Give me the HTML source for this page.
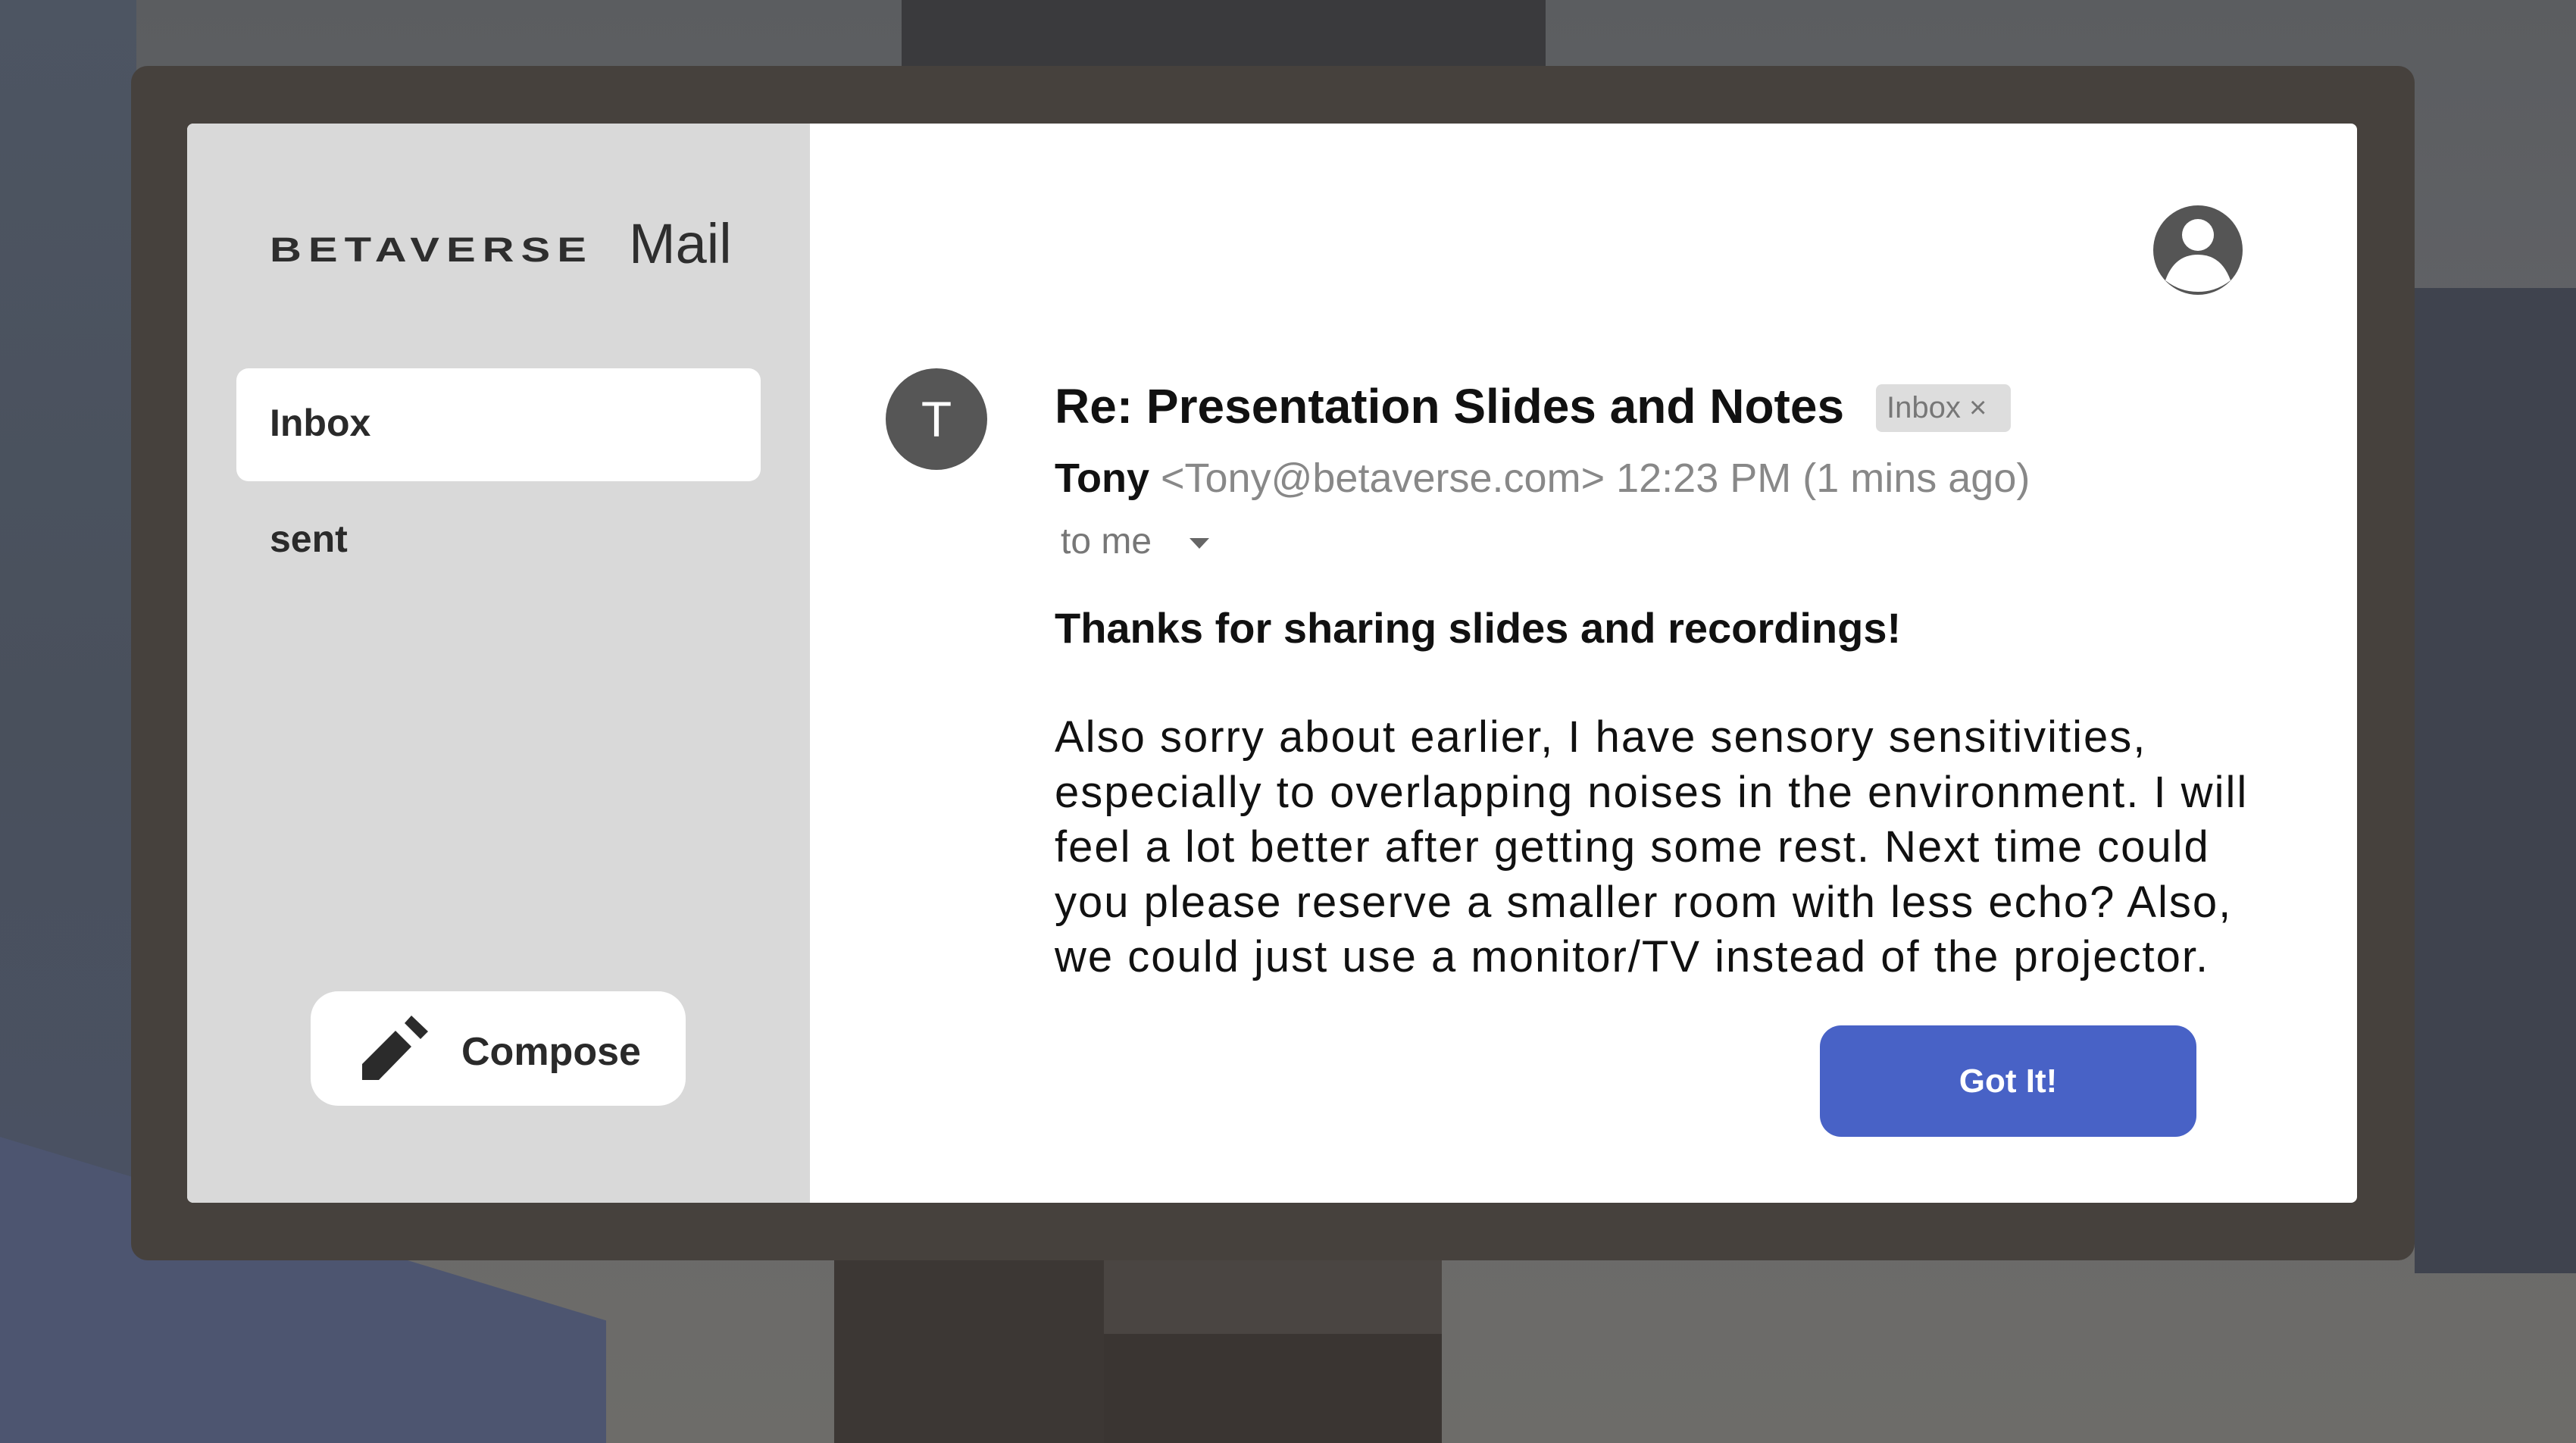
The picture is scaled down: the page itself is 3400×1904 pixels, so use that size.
<!DOCTYPE html>
<html><head><meta charset="utf-8"><style>
*{margin:0;padding:0;box-sizing:border-box}
html,body{width:3400px;height:1904px;overflow:hidden}
body{position:relative;font-family:"Liberation Sans",sans-serif;
background:linear-gradient(180deg,#5b5d60 0%,#64656a 40%,#6d6c69 100%)}
.abs{position:absolute}
</style></head><body>
<div class="abs" style="left:0;top:0;width:180px;height:1904px;background:linear-gradient(180deg,#4d5562,#49505c 50%,#4a5266)"></div>
<div class="abs" style="left:0;top:1500px;width:800px;height:404px;background:#4d5570;clip-path:polygon(0 0,100% 60%,100% 100%,0 100%)"></div>
<div class="abs" style="left:3187px;top:380px;width:213px;height:1300px;background:#3f434e"></div>
<div class="abs" style="left:1190px;top:0;width:850px;height:120px;background:#3a3a3d"></div>
<div class="abs" style="left:1101px;top:1600px;width:802px;height:304px;background:#3c3734"></div>
<div class="abs" style="left:1457px;top:1600px;width:446px;height:304px;background:#4a4542"></div>
<div class="abs" style="left:1457px;top:1760px;width:446px;height:144px;background:#3a3532"></div>
<div class="abs" style="left:173px;top:87px;width:3014px;height:1576px;background:#46413d;border-radius:22px"></div>
<div class="abs" style="left:247px;top:163px;width:2864px;height:1424px;background:#fff;border-radius:8px;overflow:hidden">
  <div class="abs" style="left:0;top:0;width:822px;height:1424px;background:#d9d9d9"></div>
</div>
<div class="abs" style="left:356px;top:300px;font-size:58px;font-weight:bold;letter-spacing:9px;color:#2e2e2e;transform:scaleY(0.78);transform-origin:left center;line-height:60px">BETAVERSE</div>
<div class="abs" style="left:830px;top:282px;font-size:74px;color:#2e2e2e;line-height:80px">Mail</div>
<div class="abs" style="left:312px;top:486px;width:692px;height:149px;background:#fff;border-radius:16px"></div>
<div class="abs" style="left:356px;top:528px;font-size:50px;font-weight:bold;color:#2a2a2a;line-height:60px">Inbox</div>
<div class="abs" style="left:356px;top:681px;font-size:50px;font-weight:bold;color:#2a2a2a;line-height:60px">sent</div>
<div class="abs" style="left:410px;top:1308px;width:495px;height:151px;background:#fff;border-radius:36px"></div>
<svg class="abs" style="left:0;top:0" width="3400" height="1904">
  <polygon points="478,1404 522,1360 543,1381 500,1425 478,1425" fill="#2b2b2b"/>
  <polygon points="534,1350 543,1340 565,1361 555,1371" fill="#2b2b2b"/>
  <circle cx="2901" cy="330" r="59" fill="#555"/>
  <circle cx="2901" cy="310" r="21" fill="#fff"/>
  <path d="M2858 370 Q2870 336 2901 336 Q2932 336 2944 370 Q2925 385 2901 385 Q2877 385 2858 370Z" fill="#fff"/>
  <circle cx="1236" cy="553" r="67" fill="#565656"/>
  <polygon points="1570,710 1596,710 1583,724" fill="#666"/>
</svg>
<div class="abs" style="left:609px;top:1358px;font-size:52px;font-weight:bold;color:#2a2a2a;line-height:60px">Compose</div>
<div class="abs" style="left:1206px;top:516px;width:60px;text-align:center;font-size:66px;color:#fff;line-height:74px">T</div>
<div class="abs" style="left:1392px;top:496px;font-size:64px;font-weight:bold;color:#111;line-height:80px;letter-spacing:0px">Re: Presentation Slides and Notes</div>
<div class="abs" style="left:2476px;top:507px;width:178px;height:63px;background:#dddddd;border-radius:8px;font-size:40px;color:#777;line-height:63px;padding-left:14px">Inbox ×</div>
<div class="abs" style="left:1392px;top:598px;font-size:54px;color:#888;line-height:66px;white-space:nowrap"><b style="color:#111">Tony</b> &lt;Tony@betaverse.com&gt; 12:23 PM (1 mins ago)</div>
<div class="abs" style="left:1400px;top:685px;font-size:48px;color:#777;line-height:60px">to me</div>
<div class="abs" style="left:1392px;top:794px;font-size:56px;font-weight:bold;color:#111;line-height:70px;letter-spacing:0px">Thanks for sharing slides and recordings!</div>
<div class="abs" style="left:1392px;top:937px;font-size:58px;color:#111;line-height:72.6px;white-space:nowrap;letter-spacing:2px">Also sorry about earlier, I have sensory sensitivities,<br>especially to overlapping noises in the environment. I will<br>feel a lot better after getting some rest. Next time could<br>you please reserve a smaller room with less echo? Also,<br>we could just use a monitor/TV instead of the projector.</div>
<div class="abs" style="left:2402px;top:1353px;width:497px;height:147px;background:#4862c6;border-radius:28px;color:#fff;font-size:44px;font-weight:bold;text-align:center;line-height:147px">Got It!</div>
</body></html>
